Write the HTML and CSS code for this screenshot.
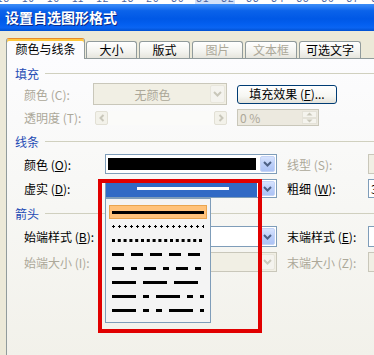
FILE: index.html
```html
<!DOCTYPE html>
<html lang="zh-CN">
<head>
    <meta charset="UTF-8">
    <title>设置自选图形格式</title>
    <link rel="stylesheet" href="styles.css">
</head>
<body>
    <div class="ruler"><span>18 · 19 · 10 · 11 · 12 · 13 · 20 · 30 · 31 · 32 · 33 · 34 · 35 · 36 · 37 · 38 · 40 · 41 · 42 · 43 · 44 · 45 · 46 · 50</span></div>
    <div class="titlebar">设置自选图形格式</div>

    <div class="dialog">
        <div class="tabs">
            <div class="tab active" style="width: 79px;">颜色与线条</div>
            <div class="tab" style="width: 51px;">大小</div>
            <div class="tab" style="width: 51px;">版式</div>
            <div class="tab disabled" style="width: 51px;">图片</div>
            <div class="tab disabled" style="width: 52px;">文本框</div>
            <div class="tab" style="width: 62px;">可选文字</div>
        </div>

        <div class="panel">
            <div class="group g-fill">填充</div>
            <div class="row fill-1">
                <span class="lbl w69 off">颜色 (C):</span>
                <div class="combo off" style="width: 134px;">
                    <span class="combo-text">无颜色</span>
                    <span class="drop off"><svg width="9" height="6" viewBox="0 0 9 6"><path d="M1 1 L4.5 4.5 L8 1" fill="none" stroke="#c9c7ba" stroke-width="2"/></svg></span>
                </div>
                <button class="xp-btn">填充效果 (<u>F</u>)...</button>
            </div>
            <div class="row fill-2">
                <span class="lbl w71 off">透明度 (T):</span>
                <div class="slider">
                    <span class="sl-btn"><svg width="6" height="8" viewBox="0 0 6 8"><path d="M4.5 1 L1.5 4 L4.5 7" fill="none" stroke="#c9c7ba" stroke-width="2"/></svg></span>
                    <span class="sl-track"></span>
                    <span class="sl-btn"><svg width="6" height="8" viewBox="0 0 6 8"><path d="M1.5 1 L4.5 4 L1.5 7" fill="none" stroke="#c9c7ba" stroke-width="2"/></svg></span>
                </div>
                <div class="spinner">
                    <span class="spin-text">0 %</span>
                    <span class="spin-btns">
                        <span><svg width="7" height="4" viewBox="0 0 7 4"><path d="M0.5 3.5 L3.5 0.5 L6.5 3.5 Z" fill="#c9c7ba"/></svg></span>
                        <span><svg width="7" height="4" viewBox="0 0 7 4"><path d="M0.5 0.5 L3.5 3.5 L6.5 0.5 Z" fill="#c9c7ba"/></svg></span>
                    </span>
                </div>
            </div>

            <div class="group g-line">线条</div>
            <div class="row line-1">
                <span class="lbl w81">颜色 (<u>O</u>):</span>
                <div class="combo">
                    <span class="swatch"></span>
                    <span class="drop"><svg width="9" height="6" viewBox="0 0 9 6"><path d="M1 1 L4.5 4.5 L8 1" fill="none" stroke="#4d6185" stroke-width="2"/></svg></span>
                </div>
                <span class="lbl w81 side off">线型 (S):</span>
                <div class="box off"></div>
            </div>
            <div class="row line-2">
                <span class="lbl w81">虚实 (<u>D</u>):</span>
                <div class="combo">
                    <span class="picked"><span class="picked-line"></span></span>
                    <span class="drop"><svg width="9" height="6" viewBox="0 0 9 6"><path d="M1 1 L4.5 4.5 L8 1" fill="none" stroke="#4d6185" stroke-width="2"/></svg></span>
                </div>
                <span class="lbl w81 side">粗细 (<u>W</u>):</span>
                <div class="box"><span class="box-text">3</span></div>
            </div>

            <div class="group g-arrow">箭头</div>
            <div class="row arrow-1">
                <span class="lbl w81">始端样式 (<u>B</u>):</span>
                <div class="combo">
                    <span class="combo-text"></span>
                    <span class="drop"><svg width="9" height="6" viewBox="0 0 9 6"><path d="M1 1 L4.5 4.5 L8 1" fill="none" stroke="#4d6185" stroke-width="2"/></svg></span>
                </div>
                <span class="lbl w81 side">末端样式 (<u>E</u>):</span>
                <div class="box"></div>
            </div>
            <div class="row arrow-2">
                <span class="lbl w81 off">始端大小 (I):</span>
                <div class="combo off">
                    <span class="combo-text"></span>
                    <span class="drop off"><svg width="9" height="6" viewBox="0 0 9 6"><path d="M1 1 L4.5 4.5 L8 1" fill="none" stroke="#c9c7ba" stroke-width="2"/></svg></span>
                </div>
                <span class="lbl w81 side off">末端大小 (Z):</span>
                <div class="box off"></div>
            </div>
        </div>
    </div>

    <!-- 虚实 下拉列表 -->
    <div class="dash-list">
        <div class="opt selected"><svg width="92" height="3"><line x1="0" y1="1.5" x2="92" y2="1.5" stroke="#000" stroke-width="3"/></svg></div>
        <div class="opt"><svg width="92" height="3"><line x1="0" y1="1.5" x2="92" y2="1.5" stroke="#000" stroke-width="1" stroke-dasharray="3 3"/><line x1="1" y1="1.5" x2="92" y2="1.5" stroke="#000" stroke-width="3" stroke-dasharray="1 5"/></svg></div>
        <div class="opt"><svg width="92" height="3"><line x1="0" y1="1.5" x2="92" y2="1.5" stroke="#000" stroke-width="3" stroke-dasharray="3 2.8"/></svg></div>
        <div class="opt"><svg width="92" height="3"><line x1="0" y1="1.5" x2="92" y2="1.5" stroke="#000" stroke-width="3" stroke-dasharray="12 7"/></svg></div>
        <div class="opt"><svg width="92" height="3"><line x1="0" y1="1.5" x2="92" y2="1.5" stroke="#000" stroke-width="3" stroke-dasharray="12 7 6 7"/></svg></div>
        <div class="opt"><svg width="92" height="3"><line x1="0" y1="1.5" x2="92" y2="1.5" stroke="#000" stroke-width="3" stroke-dasharray="24 7"/></svg></div>
        <div class="opt"><svg width="92" height="3"><line x1="0" y1="1.5" x2="92" y2="1.5" stroke="#000" stroke-width="3" stroke-dasharray="24 7 6 7"/></svg></div>
        <div class="opt"><svg width="92" height="3"><line x1="0" y1="1.5" x2="92" y2="1.5" stroke="#000" stroke-width="3" stroke-dasharray="24 7 6 7 6 7"/></svg></div>
    </div>

    <!-- 红色标注框 -->
    <div class="mark"></div>
</body>
</html>
```

FILE: styles.css
```css
* {
    margin: 0;
    padding: 0;
    box-sizing: border-box;
}

body {
    position: relative;
    width: 374px;
    height: 355px;
    overflow: hidden;
    background-color: #ece9d8;
    font-family: "Noto Sans CJK SC", "Liberation Sans", sans-serif;
    font-size: 12px;
    color: #000;
}

u {
    text-decoration: underline;
}

.ruler {
    height: 4px;
    overflow: hidden;
    white-space: nowrap;
    background: linear-gradient(90deg, #fff 195px, #d3e1f8 195px, #d3e1f8 235px, #fff 235px);
    font-family: "Liberation Sans", sans-serif;
    font-size: 10px;
    line-height: 10px;
    color: #4b64a0;
}

.ruler span {
    display: block;
    margin-top: -6px;
    margin-left: -3px;
    letter-spacing: 1px;
}

.titlebar {
    height: 27px;
    line-height: 27px;
    padding-left: 5px;
    color: #fff;
    font-size: 14px;
    font-weight: bold;
    text-shadow: 1px 1px 0 #0a2a8a;
    background: linear-gradient(180deg, #3d8ef6 0%, #2a7df5 10%, #0b63ea 25%, #0058e6 55%, #035ff0 75%, #0a64f2 88%, #0050d0 100%);
}

.dialog {
    width: 374px;
    height: 324px;
    overflow: hidden;
    padding-top: 7px;
}

.tabs {
    position: relative;
    z-index: 1;
    display: flex;
    align-items: flex-end;
    gap: 2px;
    height: 20px;
    padding-left: 6px;
}

.tab {
    height: 17px;
    line-height: 16px;
    text-align: center;
    border: 1px solid #919b9c;
    border-bottom: none;
    border-radius: 3px 3px 0 0;
    background: linear-gradient(180deg, #ffffff 0%, #f3f3ef 60%, #e6e5dd 100%);
}

.tab.active {
    height: 21px;
    line-height: 20px;
    margin-bottom: -1px;
    margin-right: -1px;
    border-top-color: #e68b2c;
    background-color: #fcfcfe;
    background-image: none;
    box-shadow: inset 0 2px 0 #ffc83c;
}

.tab.disabled {
    color: #aca899;
}

.panel {
    width: 430px;
    height: 300px;
    margin-left: 6px;
    padding-left: 8px;
    border: 1px solid #919b9c;
    background: linear-gradient(180deg, #fcfcfe 0%, #f7f7f4 50%, #f2f1ea 100%);
}

.group {
    display: flex;
    align-items: center;
    height: 16px;
    color: #1e4bb4;
    font-size: 12px;
}

.group::after {
    content: "";
    flex: 1;
    height: 1px;
    margin-left: 6px;
    background-color: #d0d0bf;
}

.g-fill { margin-top: 6px; }
.g-line { margin-top: 6px; }
.g-arrow { margin-top: 7px; }

.row {
    display: flex;
    align-items: center;
    margin-left: 9px;
}

.fill-1 { height: 22px; margin-top: 2px; }
.fill-2 { height: 19px; margin-top: 3px; }
.line-1 { height: 20px; margin-top: 5px; }
.line-2 { height: 19px; margin-top: 5px; }
.arrow-1 { height: 21px; margin-top: 5px; }
.arrow-2 { height: 20px; margin-top: 5px; }

.lbl {
    flex: none;
    white-space: nowrap;
}

.w69 { width: 69px; }
.w71 { width: 71px; }
.w81 { width: 81px; }

.lbl.side {
    margin-left: 10px;
}

.off {
    color: #aca899;
}

/* 下拉框 */
.combo {
    display: flex;
    align-items: stretch;
    width: 172px;
    height: 100%;
    padding: 1px;
    border: 1px solid #7f9db9;
    background-color: #fff;
}

.combo.off {
    border-color: #c9c7ba;
    background-color: #f1efe4;
}

.combo-text {
    flex: 1;
    display: flex;
    align-items: center;
    justify-content: center;
}

.drop {
    flex: none;
    width: 15px;
    display: flex;
    align-items: center;
    justify-content: center;
    border: 1px solid #c4d3f6;
    border-radius: 2px;
    background: linear-gradient(180deg, #d7e3fd 0%, #bccff9 50%, #adc3f5 100%);
}

.drop.off {
    border-color: #e8e6dc;
    background: #f4f3ee;
}

.swatch {
    flex: 1;
    margin: 2px 4px 2px 1px;
    background-color: #000;
}

.picked {
    flex: 1;
    display: flex;
    align-items: center;
    margin: -1px 3px -1px -1px;
    padding-left: 31px;
    background-color: #316ac5;
}

.picked-line {
    width: 92px;
    height: 3px;
    background-color: #fff;
}

.box {
    width: 40px;
    height: 100%;
    padding-left: 2px;
    border: 1px solid #7f9db9;
    background-color: #fff;
    display: flex;
    align-items: center;
}

.box.off {
    border-color: #c9c7ba;
    background-color: #f1efe4;
}

/* 按钮 */
.xp-btn {
    width: 100px;
    height: 19px;
    margin-left: 10px;
    border: 1px solid #003c74;
    border-radius: 3px;
    background: linear-gradient(180deg, #ffffff 0%, #f6f6f2 60%, #e3e2da 100%);
    font-family: "Noto Sans CJK SC", "Liberation Sans", sans-serif;
    font-size: 12px;
    line-height: 16px;
    color: #000;
    text-align: center;
}

/* 透明度 滑块 */
.slider {
    display: flex;
    width: 132px;
    height: 14px;
}

.sl-btn {
    flex: none;
    width: 13px;
    display: flex;
    align-items: center;
    justify-content: center;
    border: 1px solid #e2e0d5;
    border-radius: 2px;
    background-color: #f3f2ea;
}

.sl-track {
    flex: 1;
    background-color: #fbfbf9;
}

.spinner {
    display: flex;
    width: 82px;
    height: 17px;
    margin-left: 10px;
    border: 1px solid #c9c7ba;
    background-color: #ece9df;
    color: #aca899;
}

.spin-text {
    flex: 1;
    padding-left: 2px;
    line-height: 15px;
}

.spin-btns {
    flex: none;
    width: 15px;
    display: flex;
    flex-direction: column;
    margin: 1px;
}

.spin-btns span {
    flex: 1;
    display: flex;
    align-items: center;
    justify-content: center;
    border: 1px solid #e4e2d8;
    background-color: #f5f4ee;
}

/* 浮层：下拉列表和红框 */
.dash-list {
    position: absolute;
    left: 105px;
    top: 198px;
    width: 106px;
    height: 125px;
    padding-top: 6px;
    border: 1px solid #7f9db9;
    background-color: #f4f4f4;
}

.opt {
    display: flex;
    align-items: center;
    height: 14px;
    margin: 0 3px;
    padding: 0 2px;
    border: 1px solid transparent;
}

.opt svg {
    display: block;
}

.opt.selected {
    border-color: #e9a550;
    background-color: #ffc27a;
}

.mark {
    position: absolute;
    left: 98px;
    top: 179px;
    width: 164px;
    height: 154px;
    border: 4px solid #e10000;
}
```
